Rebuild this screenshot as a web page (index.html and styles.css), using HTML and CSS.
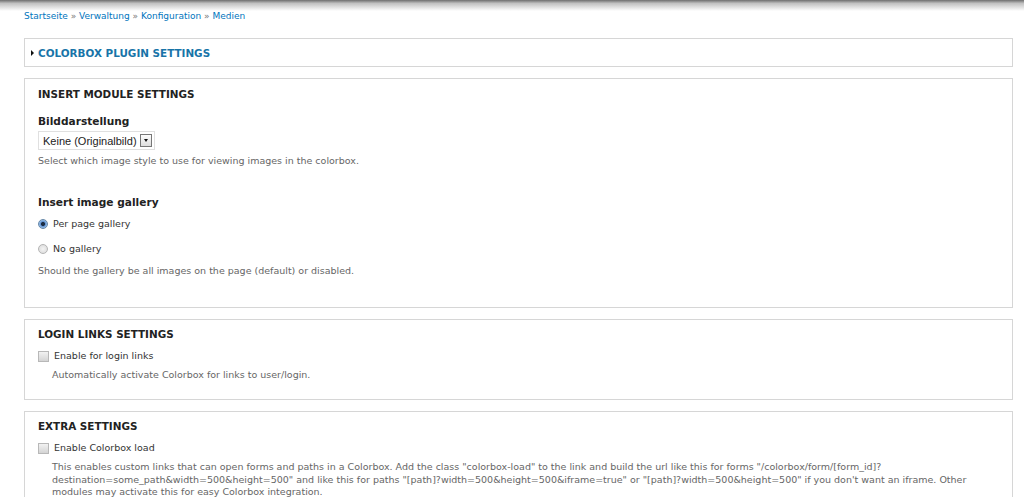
FILE: index.html
```html
<!DOCTYPE html>
<html>
  <head>
    <title>Medien | Colorbox</title>
    <meta name="viewport" content="width=device-width, initial-scale=1" />
    <link rel="stylesheet" href="styles.css">
  </head>
  <body>
    <div class="topshade"></div>
    <div class="page">
      <div class="breadcrumb">
        <a href="#">Startseite</a> » <a href="#">Verwaltung</a> » <a href="#">Konfiguration</a> » <a href="#">Medien</a>
      </div>

      <fieldset class="box collapsed">
        <div class="legend"><span class="arrow"></span><a href="#">Colorbox plugin settings</a></div>
      </fieldset>

      <fieldset class="box insert">
        <div class="legend">Insert module settings</div>
        <div class="item">
          <label class="title">Bilddarstellung</label>
          <div class="select">
            <span>Keine (Originalbild)</span>
            <span class="dropbtn"><span class="tri"></span></span>
          </div>
          <div class="desc">Select which image style to use for viewing images in the colorbox.</div>
        </div>
        <div class="item gallery">
          <label class="title">Insert image gallery</label>
          <div class="option"><span class="radio checked"></span>Per page gallery</div>
          <div class="option"><span class="radio"></span>No gallery</div>
          <div class="desc">Should the gallery be all images on the page (default) or disabled.</div>
        </div>
      </fieldset>

      <fieldset class="box login">
        <div class="legend">Login links settings</div>
        <div class="option"><span class="check"></span>Enable for login links</div>
        <div class="desc indent">Automatically activate Colorbox for links to user/login.</div>
      </fieldset>

      <fieldset class="box extra">
        <div class="legend">Extra settings</div>
        <div class="option"><span class="check"></span>Enable Colorbox load</div>
        <div class="desc indent long">This enables custom links that can open forms and paths in a Colorbox. Add the class "colorbox-load" to the link and build the url like this for forms "/colorbox/form/[form_id]?<br>destination=some_path&amp;width=500&amp;height=500" and like this for paths "[path]?width=500&amp;height=500&amp;iframe=true" or "[path]?width=500&amp;height=500" if you don't want an iframe. Other<br>modules may activate this for easy Colorbox integration.</div>
      </fieldset>
    </div>
  </body>
</html>
```

FILE: styles.css
```css
body {
  margin: 0;
  font-family: "DejaVu Sans", Verdana, sans-serif;
  font-size: 9.5px;
  color: #333;
  background-color: #fff;
  overflow: hidden;
}
a {
  color: #0074bd;
  text-decoration: none;
}
/* shadow under the toolbar */
.topshade {
  height: 11px;
  background: linear-gradient(#6e6e6e, #c0c0c0 30%, #fff);
}
.page {
  padding: 0 11px 0 24px;
}
.breadcrumb {
  color: #777;
  font-size: 9px;
  line-height: 10px;
  margin-bottom: 17px;
}
/* fieldsets */
.box {
  border: 1px solid #d6d6d6;
  margin: 0 0 11px 0;
  padding: 9px 13px 0 13px;
  min-width: 0;
}
.legend {
  font-weight: bold;
  text-transform: uppercase;
  font-size: 10.4px;
  color: #222;
  line-height: 12px;
}
.collapsed {
  height: 19px;
  padding-top: 8px;
  padding-left: 6px;
}
.collapsed .legend a {
  color: #1874a8;
}
.arrow {
  display: inline-block;
  width: 0;
  height: 0;
  border-top: 3px solid transparent;
  border-bottom: 3px solid transparent;
  border-left: 3px solid #111;
  margin-right: 4px;
  vertical-align: 1px;
}
.insert {
  height: 219px;
}
.item {
  margin-top: 15px;
}
.gallery {
  margin-top: 29px;
}
.title {
  display: block;
  font-weight: bold;
  font-size: 10.6px;
  color: #222;
  line-height: 13px;
  margin-bottom: 3px;
}
.select {
  display: inline-flex;
  align-items: center;
  height: 17px;
  border: 1px solid #e0e0e0;
  padding: 0 2px 0 4px;
  font-family: "Liberation Sans", Arial, sans-serif;
  font-size: 11px;
  color: #222;
}
.dropbtn {
  display: inline-block;
  width: 10px;
  height: 11px;
  border: 1px solid #777;
  background: linear-gradient(#fdfdfd, #ddd);
  margin-left: 3px;
  position: relative;
}
.tri {
  position: absolute;
  left: 3px;
  top: 4px;
  border-left: 2px solid transparent;
  border-right: 2px solid transparent;
  border-top: 3px solid #111;
}
.desc {
  color: #666;
  line-height: 12px;
  margin-top: 5px;
}
.indent {
  padding-left: 14px;
  margin-top: 7px;
}
.option {
  display: flex;
  align-items: center;
  line-height: 12px;
  color: #333;
  margin-top: 10px;
}
.gallery .option {
  margin-top: 9px;
  margin-bottom: 13px;
}
.gallery .desc {
  margin-top: -3px;
}
.radio {
  display: inline-block;
  width: 8px;
  height: 8px;
  border-radius: 50%;
  border: 1px solid #b5b5b5;
  background: radial-gradient(#f4f4f4, #d8d8d8);
  margin-right: 5px;
}
.radio.checked {
  border-color: #6688a8;
  background: radial-gradient(circle, #1b2c44 0, #1b2c44 1.6px, #5d8fd0 2.4px, #9cc1ea 4px);
}
.check {
  display: inline-block;
  width: 9px;
  height: 9px;
  border: 1px solid #b8b8b8;
  background: linear-gradient(#f2f2f2, #d4d4d4);
  margin-right: 5px;
}
.login {
  padding-top: 8px;
  height: 71px;
}
.extra {
  padding-top: 8px;
}
.long {
  line-height: 12.5px;
}
```
